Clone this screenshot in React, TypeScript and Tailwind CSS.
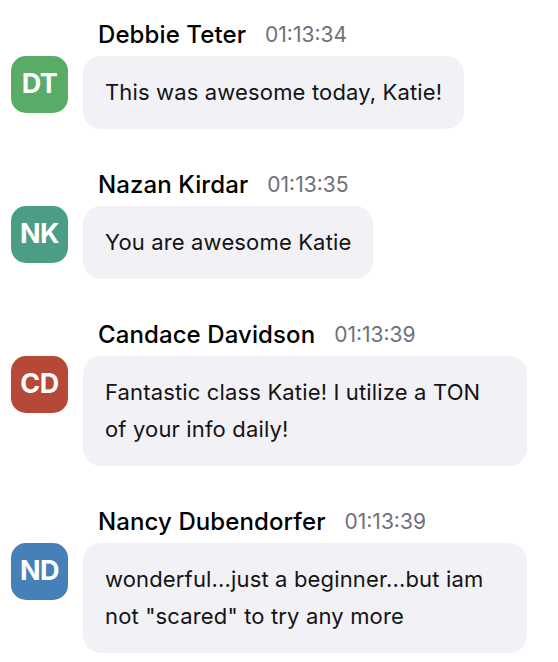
const messages = [
  { initials: 'DT', name: 'Debbie Teter', time: '01:13:34', color: 'bg-[#59ab68]', text: 'This was awesome today, Katie!' },
  { initials: 'NK', name: 'Nazan Kirdar', time: '01:13:35', color: 'bg-[#4c9d86]', text: 'You are awesome Katie' },
  { initials: 'CD', name: 'Candace Davidson', time: '01:13:39', color: 'bg-[#b64837]', text: 'Fantastic class Katie! I utilize a TON of your info daily!' },
  { initials: 'ND', name: 'Nancy Dubendorfer', time: '01:13:39', color: 'bg-[#4680b9]', text: 'wonderful...just a beginner...but iam not "scared" to try any more' },
]

export default function App() {
  return (
    <div className="min-h-screen bg-white pt-[20px] pl-[11px] pr-[31px] font-['Inter',sans-serif] text-black">
      <div className="flex flex-col gap-[41px]">
        {messages.map((m) => (
          <div key={m.initials} className="flex flex-col gap-[6px]">
            <div className="flex items-center gap-[19px] pl-[87px] h-[30px]">
              <span className="text-[24px] font-medium leading-[30px] tracking-[0.1px]">{m.name}</span>
              <span className="text-[21px] leading-[30px] text-[#6e7178]">{m.time}</span>
            </div>
            <div className="flex items-start gap-[15px]">
              <div className={`${m.color} w-[57px] h-[57px] shrink-0 rounded-[15px] flex items-center justify-center text-white text-[27px] font-bold tracking-[-0.5px]`}>
                {m.initials}
              </div>
              <div className="bg-[#f1f1f6] rounded-[18px] px-[22px] py-[18px] max-w-[444px]">
                <p className="text-[22px] leading-[37px] tracking-[0.15px] text-[#141414]">{m.text}</p>
              </div>
            </div>
          </div>
        ))}
      </div>
    </div>
  )
}
